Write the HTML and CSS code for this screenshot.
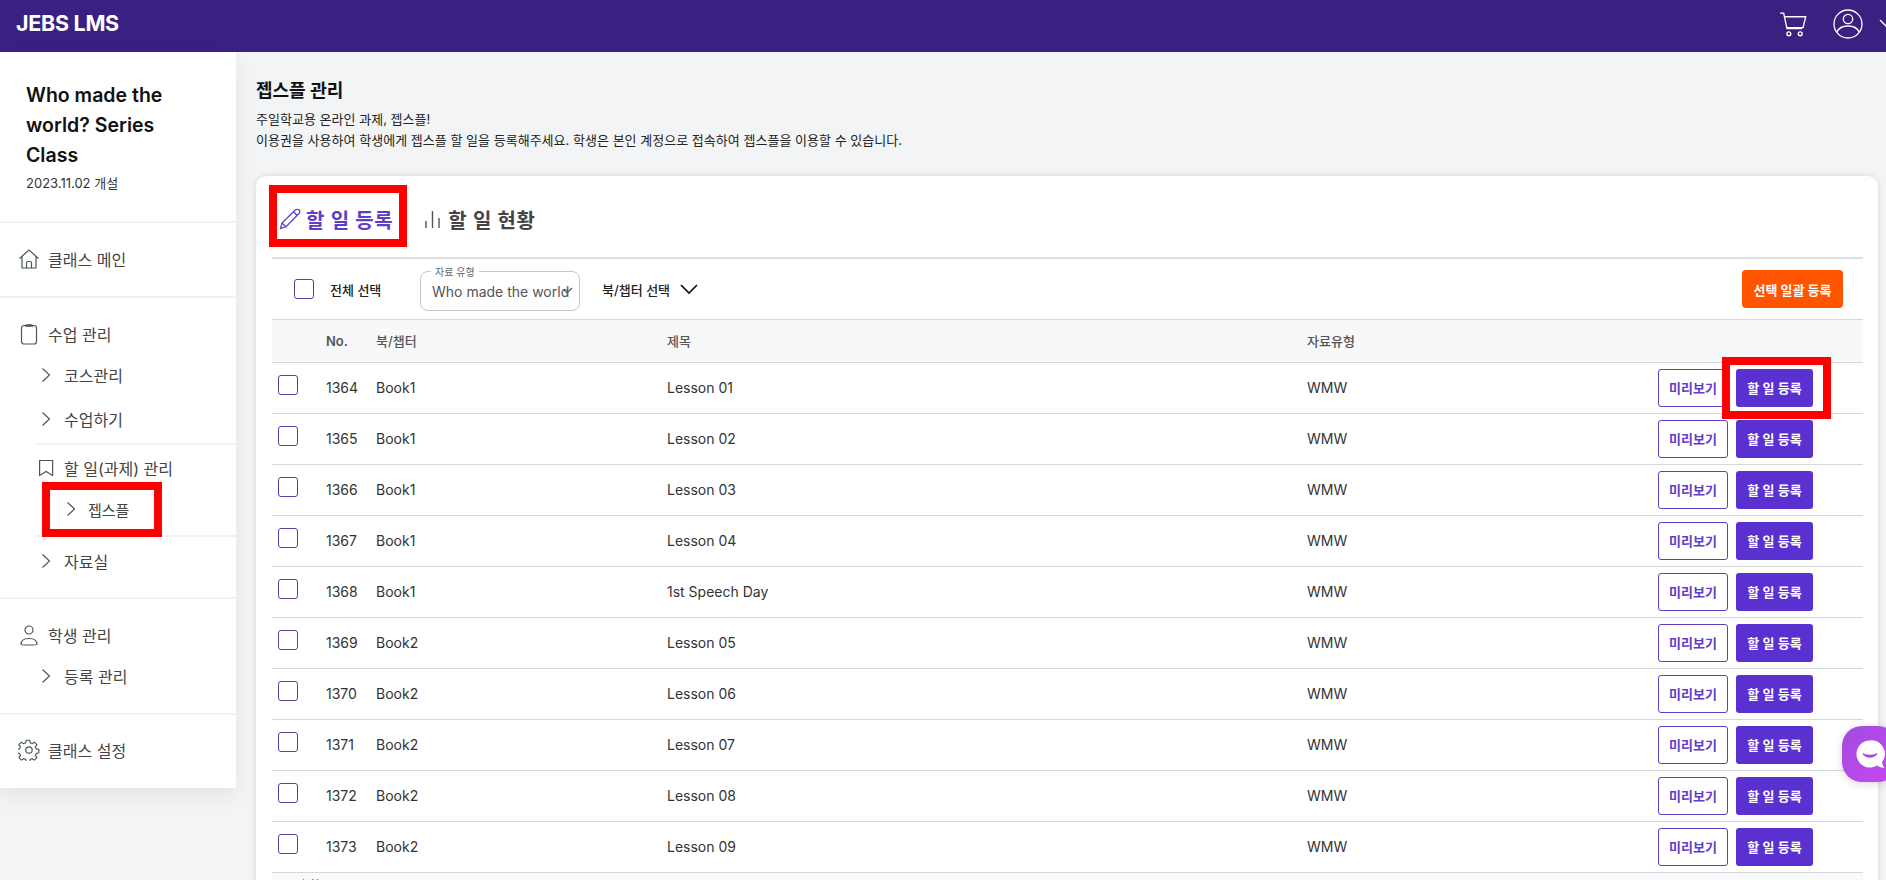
FILE: index.html
```html
<!DOCTYPE html>
<html lang="ko">
<head>
<meta charset="utf-8">
<title>JEBS LMS</title>
<link rel="stylesheet" href="styles.css">
</head>
<body>
<header class="topbar">
  <div class="logo">JEBS LMS</div>
  <div class="top-icons">
    <svg class="cart" viewBox="0 0 28 28" fill="none" stroke="#fff" stroke-width="1.3"><path d="M1 3h3.500l3.200 15h14.600"/><path d="M5.300 6.500h20.500l-2.600 10.500H7.500"/><circle cx="9.500" cy="23" r="1.900"/><circle cx="20.500" cy="23" r="1.900"/></svg>
    <svg class="avatar" viewBox="0 0 30 30" fill="none" stroke="#fff" stroke-width="1.3"><circle cx="15" cy="15" r="14"/><circle cx="15" cy="10" r="4.700"/><path d="M3.800 23c2-4.200 6-6 11.200-6s9.200 1.800 11.200 6"/></svg>
    <svg class="caret" viewBox="0 0 16 10" fill="none" stroke="#fff" stroke-width="1.4"><path d="M1 1l7 7 7-7"/></svg>
  </div>
</header>
<div class="shell">
  <aside class="sidebar">
    <section class="class-info">
      <h2>Who made the world? Series Class</h2>
      <p>2023.11.02 개설</p>
    </section>
    <nav>
      <div class="nav-sec sec-main">
        <div class="nav-top"><svg class="ico" viewBox="0 0 22 22" fill="none" stroke="#47575c" stroke-width="1.200"><path d="M1.500 10.500L11 2l9.500 8.500"/><path d="M4 8.500V20h14V8.500"/><path d="M8.500 20v-5a1.500 1.500 0 0 1 1.500-1.500h2a1.500 1.500 0 0 1 1.500 1.500v5"/></svg>클래스 메인</div>
      </div>
      <div class="nav-sec sec-class">
        <div class="nav-top"><svg class="ico" viewBox="0 0 22 22" fill="none" stroke="#47575c" stroke-width="1.200"><rect x="3.500" y="2.500" width="15" height="18.500" rx="2.500"/><path d="M7.500 2.500c0-1.300 7-1.300 7 0v.7h-7z"/></svg>수업 관리</div>
        <div class="nav-sub sub1"><svg class="chev" viewBox="0 0 10 16" fill="none" stroke="#555" stroke-width="1.200"><path d="M1.500 1.500L8.500 8l-7 6.500"/></svg>코스관리</div>
        <div class="nav-sub sub2"><svg class="chev" viewBox="0 0 10 16" fill="none" stroke="#555" stroke-width="1.200"><path d="M1.500 1.500L8.500 8l-7 6.500"/></svg>수업하기</div>
        <div class="nav-group">
          <div class="nav-book"><svg class="book" viewBox="0 0 16 18" fill="none" stroke="#47575c" stroke-width="1.200"><path d="M.6 1.500h13V16.500L7.100 12.500.6 16.500z"/></svg>할 일(과제) 관리</div>
          <div class="nav-leaf"><svg class="chev" viewBox="0 0 10 16" fill="none" stroke="#555" stroke-width="1.200"><path d="M1.500 1.500L8.500 8l-7 6.500"/></svg>젭스플</div>
        </div>
        <div class="nav-sub sub3"><svg class="chev" viewBox="0 0 10 16" fill="none" stroke="#555" stroke-width="1.200"><path d="M1.500 1.500L8.500 8l-7 6.500"/></svg>자료실</div>
      </div>
      <div class="nav-sec sec-student">
        <div class="nav-top"><svg class="ico" viewBox="0 0 22 22" fill="none" stroke="#47575c" stroke-width="1.200"><circle cx="11" cy="6" r="4"/><path d="M3 20.500c0-4 3.500-6 8-6s8 2 8 6c0 .5-16 .5-16 0z"/></svg>학생 관리</div>
        <div class="nav-sub sub1"><svg class="chev" viewBox="0 0 10 16" fill="none" stroke="#555" stroke-width="1.200"><path d="M1.500 1.500L8.500 8l-7 6.500"/></svg>등록 관리</div>
      </div>
      <div class="nav-sec sec-set">
        <div class="nav-top"><svg class="ico" viewBox="0 0 24 24" fill="none" stroke="#47575c" stroke-width="1.300"><circle cx="12" cy="12" r="3.500"/><path d="M10 2h4l.6 3 2.300 1 2.600-1.700 2.800 2.800-1.700 2.600 1 2.300 3 .6v4l-3 .6-1 2.300 1.700 2.600-2.800 2.800-2.600-1.700-2.300 1-.6 3h-4l-.6-3-2.300-1-2.600 1.700-2.800-2.800 1.700-2.600-1-2.300-3-.6v-4l3-.6 1-2.300L1.600 7.100l2.800-2.800L7 6l2.300-1z" transform="translate(-.6 -.6) scale(.95)"/></svg>클래스 설정</div>
      </div>
    </nav>
  </aside>
  <main class="content">
    <h1>젭스플 관리</h1>
    <p class="intro">주일학교용 온라인 과제, 젭스플!</p>
    <p class="intro">이용권을 사용하여 학생에게 젭스플 할 일을 등록해주세요. 학생은 본인 계정으로 접속하여 젭스플을 이용할 수 있습니다.</p>
    <div class="card">
      <div class="tabs">
        <div class="tab active"><svg class="tab-ico" viewBox="0 0 22 22" fill="none" stroke="#5f3dc9" stroke-width="1.300"><path d="M1.500 20.500l1.500-5.500L16.500 1.800c.8-.7 3-.7 3.700 0s.7 2.700 0 3.500L7 18.700z"/><path d="M14.500 3.800l3.700 3.700M3 15l3.800 3.800"/></svg>할 일 등록</div>
        <div class="tab"><svg class="tab-ico2" viewBox="0 0 18 18" fill="none" stroke="#555" stroke-width="1.400"><path d="M2 18v-7M8.500 18V1M15 18V8"/></svg>할 일 현황</div>
      </div>
      <div class="toolbar">
        <span class="check"></span>
        <span class="all">전체 선택</span>
        <div class="select"><span class="legend">자료 유형</span><span class="sel-text">Who made the world</span><svg class="sel-arrow" viewBox="0 0 10 8" fill="none" stroke="#555" stroke-width="1.200"><path d="M1 3l3 3 5-5"/></svg></div>
        <div class="book-pick">북/챕터 선택<svg class="pick-chev" viewBox="0 0 18 11" fill="none" stroke="#111" stroke-width="1.700"><path d="M1 1l8 8 8-8"/></svg></div>
        <button class="bulk">선택 일괄 등록</button>
      </div>
      <table class="grid">
        <colgroup><col class="c-check"><col class="c-no"><col class="c-book"><col class="c-title"><col class="c-type"><col class="c-act"></colgroup>
        <thead><tr><th></th><th>No.</th><th>북/챕터</th><th>제목</th><th>자료유형</th><th></th></tr></thead>
        <tbody>
          <tr><td class="cc"><span class="check"></span></td><td>1364</td><td>Book1</td><td>Lesson 01</td><td>WMW</td><td class="act"><button class="prev">미리보기</button><button class="reg">할 일 등록</button></td></tr>
          <tr><td class="cc"><span class="check"></span></td><td>1365</td><td>Book1</td><td>Lesson 02</td><td>WMW</td><td class="act"><button class="prev">미리보기</button><button class="reg">할 일 등록</button></td></tr>
          <tr><td class="cc"><span class="check"></span></td><td>1366</td><td>Book1</td><td>Lesson 03</td><td>WMW</td><td class="act"><button class="prev">미리보기</button><button class="reg">할 일 등록</button></td></tr>
          <tr><td class="cc"><span class="check"></span></td><td>1367</td><td>Book1</td><td>Lesson 04</td><td>WMW</td><td class="act"><button class="prev">미리보기</button><button class="reg">할 일 등록</button></td></tr>
          <tr><td class="cc"><span class="check"></span></td><td>1368</td><td>Book1</td><td>1st Speech Day</td><td>WMW</td><td class="act"><button class="prev">미리보기</button><button class="reg">할 일 등록</button></td></tr>
          <tr><td class="cc"><span class="check"></span></td><td>1369</td><td>Book2</td><td>Lesson 05</td><td>WMW</td><td class="act"><button class="prev">미리보기</button><button class="reg">할 일 등록</button></td></tr>
          <tr><td class="cc"><span class="check"></span></td><td>1370</td><td>Book2</td><td>Lesson 06</td><td>WMW</td><td class="act"><button class="prev">미리보기</button><button class="reg">할 일 등록</button></td></tr>
          <tr><td class="cc"><span class="check"></span></td><td>1371</td><td>Book2</td><td>Lesson 07</td><td>WMW</td><td class="act"><button class="prev">미리보기</button><button class="reg">할 일 등록</button></td></tr>
          <tr><td class="cc"><span class="check"></span></td><td>1372</td><td>Book2</td><td>Lesson 08</td><td>WMW</td><td class="act"><button class="prev">미리보기</button><button class="reg">할 일 등록</button></td></tr>
          <tr><td class="cc"><span class="check"></span></td><td>1373</td><td>Book2</td><td>Lesson 09</td><td>WMW</td><td class="act"><button class="prev">미리보기</button><button class="reg">할 일 등록</button></td></tr>
        </tbody>
      </table>
      <div class="total">총합</div>
    </div>
  </main>
</div>
<div class="mark mark-side"></div>
<div class="mark mark-tab"></div>
<div class="mark mark-btn"></div>
<div class="chat"><svg viewBox="0 0 40 40"><path d="M20 4a16 16 0 1 0 8.500 29.600c2 1.700 5 2.700 8.500 2.400-1.800-1.800-2.700-4-2.700-6.500A16 16 0 0 0 20 4z" fill="#fff"/><path d="M12 20c5 5 11 5 16 0-4 2-12 2-16 0z" fill="#a746e6" stroke="#a746e6" stroke-width="1.500" stroke-linejoin="round"/></svg></div>
</body>
</html>
```
FILE: styles.css
```css
* { box-sizing: border-box; }
html, body { margin: 0; height: 880px; overflow: hidden; }
body {
  background: #f2f4f6;
  color: #222;
  font-family: Inter, "Noto Sans CJK KR", sans-serif;
  font-size: 14px;
}
.topbar {
  height: 52px;
  background: #3a2080;
  display: flex;
  align-items: center;
  justify-content: space-between;
  padding-left: 16px;
  color: #fff;
}
.logo { font-size: 21.500px; font-weight: 700; letter-spacing: -0.3px; margin-top: -6px; }
.top-icons { display: flex; align-items: center; margin-top: -4px; }
.cart { width: 29px; height: 29px; margin-right: 25px; }
.avatar { width: 30px; height: 30px; margin-right: 16px; }
.caret { width: 16px; height: 10px; margin-right: -9px; }

.shell { display: flex; align-items: flex-start; }
.sidebar {
  width: 236px;
  height: 736px;
  flex: none;
  background: #fff;
  box-shadow: 0 8px 20px rgba(0,0,0,.07);
}
.class-info { height: 171px; padding: 28px 26px 0; border-bottom: 2px solid #f1f2f3; }
.class-info h2 { margin: 0; font-size: 19.500px; line-height: 30px; font-weight: 600; color: #111; }
.class-info p { margin: 4px 0 0; font-size: 13px; line-height: 18px; color: #333; }
.nav-sec { border-bottom: 2px solid #f1f2f3; }
.nav-sec:last-child { border-bottom: 0; }
.sec-main { height: 75px; padding-top: 24px; }
.sec-class { height: 301px; padding-top: 24px; }
.sec-student { height: 116px; padding-top: 24px; }
.sec-set { height: 73px; padding-top: 23px; }
.nav-top { display: flex; align-items: center; height: 24px; padding-left: 18px; font-size: 16px; color: #444; }
.ico { width: 22px; height: 22px; margin-right: 8px; flex: none; }
.nav-sub { display: flex; align-items: center; height: 24px; padding-left: 41px; font-size: 16px; color: #444; }
.chev { width: 10px; height: 16px; margin-right: 13px; flex: none; }
.sub1 { margin-top: 17px; }
.sub2 { margin-top: 20px; }
.nav-group { margin: 12px 0 0 36px; height: 94px; border: solid #f1f2f3; border-width: 2px 0; padding-top: 11px; }
.nav-book { display: flex; align-items: center; height: 24px; padding-left: 3px; font-size: 16px; color: #444; }
.book { width: 16px; height: 18px; margin-right: 9px; }
.nav-leaf { display: flex; align-items: center; height: 20px; margin-top: 19px; padding-left: 30px; font-size: 15px; color: #444; }
.nav-leaf .chev { margin-right: 12px; }
.sub3 { margin-top: 12px; }

.content { flex: 1; min-width: 0; padding: 27px 8px 0 20px; }
h1 { margin: 0 0 6px; font-size: 18px; line-height: 24px; font-weight: 600; color: #111; }
.intro { margin: 0; font-size: 13px; line-height: 21px; color: #222; letter-spacing: .02px; }
.card {
  margin-top: 25px;
  background: #fff;
  border-radius: 10px;
  padding: 0 15px 20px 16px;
  box-shadow: 0 0 6px rgba(0,0,0,.12);
  height: 900px;
}
.tabs { height: 83px; display: flex; align-items: center; gap: 31px; padding: 5px 0 0 7px; border-bottom: 2px solid #dcdee0; }
.tab { display: flex; align-items: center; font-size: 20px; font-weight: 600; color: #444; letter-spacing: .6px; }
.tab.active { color: #5f3dc9; }
.tab-ico { width: 22px; height: 22px; margin-right: 5px; }
.tab-ico2 { width: 18px; height: 18px; margin-right: 6px; }
.toolbar { height: 61px; display: flex; align-items: center; border-bottom: 1px solid #d5d7da; padding-left: 22px; padding-right: 20px; }
.check { display: block; width: 20px; height: 20px; border: 1.500px solid #5a3da8; border-radius: 3px; background: #fff; flex: none; }
.all { margin-left: 16px; width: 90px; font-size: 13px; font-weight: 500; color: #222; }
.select { position: relative; width: 160px; height: 40px; margin-top: 4px; border: 1px solid #c4c7cb; border-radius: 8px; display: flex; align-items: center; padding-left: 11px; }
.legend { position: absolute; left: 10px; top: -6px; background: #fff; padding: 0 4px; font-size: 10px; line-height: 12px; color: #666; }
.sel-text { font-size: 14px; color: #555; white-space: nowrap; }
.sel-arrow { position: absolute; left: 142px; top: 15px; width: 10px; height: 8px; }
.book-pick { display: flex; align-items: center; margin-left: 22px; font-size: 13px; font-weight: 500; color: #222; }
.pick-chev { width: 18px; height: 11px; margin-left: 10px; }
button { font-family: inherit; cursor: pointer; }
.bulk { margin-left: auto; width: 101px; height: 38px; background: #ff5500; color: #fff; border: 0; border-radius: 4px; font-size: 13px; font-weight: 700; padding: 0; white-space: nowrap; }
.grid { width: 1591px; border-collapse: collapse; table-layout: fixed; }
.c-check { width: 54px; } .c-no { width: 50px; } .c-book { width: 291px; } .c-title { width: 640px; } .c-type { width: 276px; } .c-act { width: 280px; }
.grid th { height: 42px; background: #f7f8fa; border-bottom: 1px solid #d5d7da; text-align: left; padding: 0; font-size: 13px; font-weight: 500; color: #555; }
.grid th:nth-child(2) { font-weight: 600; font-size: 13px; }
.grid td { height: 51px; border-bottom: 1px solid #d5d7da; padding: 0; font-size: 14px; color: #333; }
.cc .check { margin: -5px 0 0 6px; }
.grid .act { padding-right: 50px; text-align: right; white-space: nowrap; }
.act button { height: 38px; border-radius: 3px; font-size: 13px; font-weight: 600; padding: 0; vertical-align: middle; }
.prev { width: 70px; background: #fff; color: #5f3dc9; border: 1px solid #5f3dc9; }
.reg { width: 77px; background: #5a30d0; color: #fff; border: 0; margin-left: 8px; }
.total { background: #f8f9fa; padding: 5px 0 0 26px; font-size: 12px; line-height: 16px; color: #555; }

.mark { position: fixed; border: 8px solid #f00; pointer-events: none; }
.mark-side { left: 42px; top: 482px; width: 120px; height: 55px; }
.mark-tab { left: 269px; top: 185px; width: 138px; height: 62px; }
.mark-btn { left: 1722px; top: 357px; width: 109px; height: 62px; }
.chat {
  position: fixed; left: 1842px; top: 726px; width: 56px; height: 56px; border-radius: 20px;
  background: linear-gradient(135deg, #a04ce0, #cc45f2);
  box-shadow: 0 2px 10px rgba(0,0,0,.15);
  display: flex; align-items: center; justify-content: center;
}
.chat svg { width: 34px; height: 34px; margin-left: -1px; }
```
